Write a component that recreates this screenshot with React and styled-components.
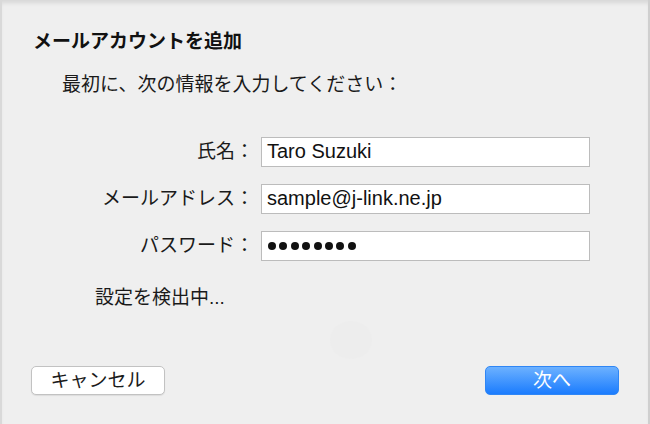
import React from "react"
import styled, { createGlobalStyle } from "styled-components"

const GlobalStyle = createGlobalStyle`
  body {
    margin: 0;
    background: #efefef;
  }
`

const JP = `"Liberation Sans", "Noto Sans CJK JP", sans-serif`

const fields = [
  { label: "氏名：", value: "Taro Suzuki" },
  { label: "メールアドレス：", value: "sample@j-link.ne.jp" },
  { label: "パスワード：", secret: 8 },
]

const App = () => (
  <>
    <GlobalStyle />
    <Sheet>
      <Title>メールアカウントを追加</Title>
      <Intro>最初に、次の情報を入力してください：</Intro>
      <Form>
        {fields.map((f) => (
          <React.Fragment key={f.label}>
            <Label>{f.label}</Label>
            <Field>
              {f.secret
                ? Array.from({ length: f.secret }, (_, i) => <Dot key={i} />)
                : f.value}
            </Field>
          </React.Fragment>
        ))}
      </Form>
      <Status>設定を検出中...</Status>
      <Spinner>
        <svg width="44" height="40" viewBox="0 0 44 40">
          <ellipse cx="22" cy="20" rx="21" ry="19" fill="#ececec" />
        </svg>
      </Spinner>
      <Footer>
        <Button>キャンセル</Button>
        <Button $primary>次へ</Button>
      </Footer>
    </Sheet>
  </>
)

const Sheet = styled.div`
  width: 650px;
  height: 424px;
  box-sizing: border-box;
  display: flex;
  flex-direction: column;
  background: #efefef;
  border-left: 2px solid #d9d9d9;
  border-right: 2px solid #cfcfcf;
  box-shadow: inset 0 5px 4px -2px rgba(0, 0, 0, 0.1);
  padding: 30px 0 29px;
  font-family: ${JP};
  color: #1a1a1a;
`

const Title = styled.h1`
  margin: 0 0 0 31px;
  font-size: 19px;
  line-height: 24px;
  font-weight: bold;
  color: #111;
`

const Intro = styled.p`
  margin: 19px 0 0 60px;
  font-size: 19px;
  line-height: 24px;
`

const Form = styled.div`
  display: grid;
  grid-template-columns: 252px 329px;
  column-gap: 7px;
  row-gap: 17px;
  margin-top: 40px;
`

const Label = styled.div`
  text-align: right;
  font-size: 19px;
  line-height: 30px;
`

const Field = styled.div`
  height: 30px;
  box-sizing: border-box;
  display: flex;
  align-items: center;
  gap: 3.4px;
  background: #fff;
  border: 1px solid #bcbcbc;
  padding: 0 5px 1px;
  font-family: "Liberation Sans", Arial, sans-serif;
  font-size: 20px;
  color: #111;
`

const Dot = styled.span`
  width: 8px;
  height: 8px;
  border-radius: 50%;
  background: #111;
  &:first-child {
    margin-left: 1px;
  }
`

const Status = styled.div`
  margin: 25px 0 0 93px;
  font-size: 19px;
  line-height: 24px;
`

const Spinner = styled.div`
  margin: 10px 0 0 327px;
  height: 40px;
  opacity: 0.4;
`

const Footer = styled.div`
  margin-top: auto;
  display: flex;
  justify-content: space-between;
  padding: 0 29px;
`

const Button = styled.button`
  width: 134px;
  height: 29px;
  box-sizing: border-box;
  border-radius: 5px;
  font-family: ${JP};
  font-size: 19px;
  line-height: 25px;
  padding: 0;
  cursor: pointer;
  border: 1px solid ${(p) => (p.$primary ? "#2f86f5" : "#c2c2c2")};
  color: ${(p) => (p.$primary ? "#fff" : "#1a1a1a")};
  background: ${(p) =>
    p.$primary ? "linear-gradient(#6cb1ff, #1b7cfe)" : "#ffffff"};
  box-shadow: ${(p) =>
    p.$primary ? "none" : "0 1px 1px rgba(0, 0, 0, 0.08)"};
`

export default App
